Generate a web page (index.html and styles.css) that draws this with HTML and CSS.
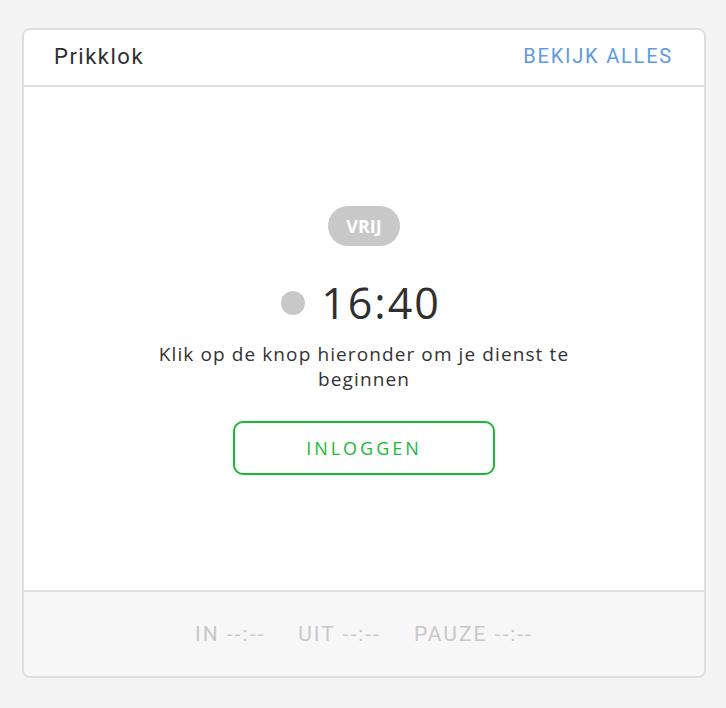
FILE: index.html
```html
<!DOCTYPE html>
<html lang="nl">
<head>
<meta charset="utf-8">
<title>Prikklok</title>
<link rel="stylesheet" href="styles.css">
</head>
<body>
<div class="card">
  <div class="card-header">
    <span class="title">Prikklok</span>
    <a class="link" href="#">BEKIJK ALLES</a>
  </div>
  <div class="card-body">
    <span class="badge">VRIJ</span>
    <div class="time-row">
      <span class="dot"></span>
      <span class="time">16:40</span>
    </div>
    <p class="hint">Klik op de knop hieronder om je dienst te beginnen</p>
    <button class="btn" type="button">INLOGGEN</button>
  </div>
  <div class="card-footer">
    <span>IN --:--</span>
    <span>UIT --:--</span>
    <span>PAUZE --:--</span>
  </div>
</div>
</body>
</html>
```
FILE: styles.css
```css
html, body {
  margin: 0;
  padding: 0;
  background: #f4f4f4;
}
body {
  padding: 28px 20px 30px 22px;
  font-family: "Open Sans", "Noto Sans", sans-serif;
}
.card {
  box-sizing: border-box;
  width: 684px;
  height: 650px;
  border: 2px solid #dedede;
  border-radius: 8px;
  background: #fff;
  display: flex;
  flex-direction: column;
  overflow: hidden;
}
.card-header {
  height: 55px;
  border-bottom: 2px solid #dedede;
  display: flex;
  align-items: center;
  justify-content: space-between;
  padding: 0 31px 0 30px;
  font-family: Roboto, "Liberation Sans", sans-serif;
}
.title {
  font-size: 22px;
  color: #2f2f2f;
  letter-spacing: 1.5px;
  margin-top: -2px;
}
.link {
  font-size: 20px;
  color: #5e9ae0;
  text-decoration: none;
  letter-spacing: 1.8px;
  margin-top: -4px;
}
.card-body {
  flex: 1;
  display: flex;
  flex-direction: column;
  align-items: center;
  justify-content: center;
  border-bottom: 2px solid #dedede;
  padding-top: 4px;
}
.badge {
  display: inline-block;
  background: #c8c8c8;
  color: #fff;
  font-weight: 700;
  font-size: 18px;
  line-height: 40px;
  height: 40px;
  padding: 0 18px;
  border-radius: 20px;
}
.time-row {
  display: flex;
  align-items: center;
  gap: 16px;
  margin-top: 32px;
  margin-left: -6px;
}
.dot {
  width: 24px;
  height: 24px;
  border-radius: 50%;
  background: #c8c8c8;
}
.time {
  font-size: 43px;
  line-height: 50px;
  color: #2f2f2f;
  letter-spacing: 2px;
}
.hint {
  margin: 14px 0 0;
  width: 430px;
  text-align: center;
  font-size: 19px;
  line-height: 25px;
  color: #333;
  letter-spacing: 1.1px;
}
.btn {
  margin-top: 29px;
  width: 262px;
  height: 54px;
  border: 2.5px solid #18b935;
  border-radius: 10px;
  background: #fff;
  color: #18b935;
  font-family: "Open Sans", "Noto Sans", sans-serif;
  font-size: 18px;
  letter-spacing: 3px;
}
.card-footer {
  height: 84px;
  background: #f7f7f7;
  display: flex;
  align-items: center;
  justify-content: center;
  gap: 33px;
  font-family: Roboto, "Liberation Sans", sans-serif;
  font-size: 21px;
  letter-spacing: 2px;
  color: #c8c8c8;
}
```
